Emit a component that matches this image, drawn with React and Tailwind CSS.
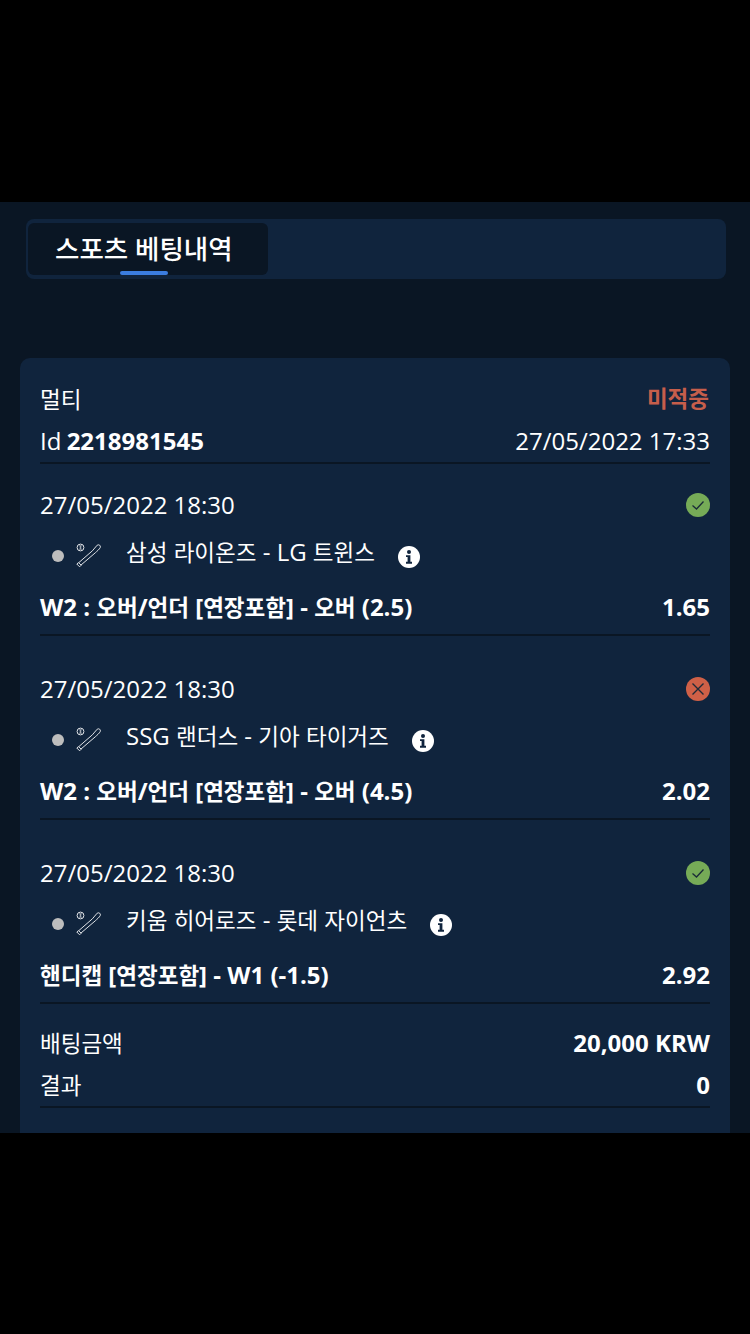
import React from "react";

const bets = [
    { status: "win", match: "삼성 라이온즈 - LG 트윈스", market: "W2 : 오버/언더 [연장포함] - 오버 (2.5)", odds: "1.65" },
    { status: "lose", match: "SSG 랜더스 - 기아 타이거즈", market: "W2 : 오버/언더 [연장포함] - 오버 (4.5)", odds: "2.02" },
    { status: "win", match: "키움 히어로즈 - 롯데 자이언츠", market: "핸디캡 [연장포함] - W1 (-1.5)", odds: "2.92" }
];

// hangul runs are set a bit smaller than the latin text around them
const Ko = ({ children }) => (
    <span>
        {children.split(/([가-힣]+)/).map((part, i) => (
            i % 2 === 1 ? <span key={i} className="text-[22.5px]">{part}</span> : part
        ))}
    </span>
);

const BatIcon = () => (
    <svg width="26" height="26" viewBox="0 0 26 26" fill="none" stroke="#dfe2e6" strokeWidth="1">
        <circle cx="4.5" cy="4.5" r="3.4" />
        <path d="M3.5 1.4c1 1.8 1 4.4 0 6.2M5.5 1.4c-1 1.8-1 4.4 0 6.2" strokeWidth="0.7" />
        <path d="M2.6 19.8 16.4 7.8c1.6-1.5 3-4 4.8-5.6 1.6-1.2 3.8.4 3.1 2.2-.9 2-3.4 3.8-5 5.4L5 22" />
        <path d="M0.8 21 2.5 19.6 5.2 22.2 3.6 23.8Z" />
    </svg>
);

const StatusIcon = ({ status }) => (
    <svg width="24" height="24" viewBox="0 0 24 24" fill="none">
        <circle cx="12" cy="12" r="12" fill={status === "win" ? "#76ab57" : "#cf6047"} />
        {status === "win" ? (
            <path d="M6.5 12.5 10.5 16 17.5 8.5" stroke="#1a2b38" strokeWidth="1.3" />
        ) : (
            <path d="M6.5 6.5 17.5 17.5M17.5 6.5 6.5 17.5" stroke="#1f2a38" strokeWidth="1.4" />
        )}
    </svg>
);

const InfoIcon = () => (
    <svg width="22" height="22" viewBox="0 0 22 22">
        <circle cx="11" cy="11" r="11" fill="#ffffff" />
        <circle cx="11" cy="6" r="2" fill="#10243d" />
        <path d="M8 9.2h4.4v6.6H14v1.9H8v-1.9h1.6v-4.7H8Z" fill="#10243d" />
    </svg>
);

const BetRow = ({ bet }) => (
    <div className="mb-[37px]">
        <div className="flex items-center justify-between h-[32px]">
            <span>27/05/2022 18:30</span>
            <StatusIcon status={bet.status} />
        </div>
        <div className="flex items-center h-[34px] mt-[15px] pl-[12px]">
            <span className="w-[12px] h-[12px] rounded-full bg-[#bdbdbd] mr-[12px] mt-[6px]"></span>
            <span className="mt-[6px]"><BatIcon /></span>
            <span className="ml-[24px] -translate-y-[1px]"><Ko>{bet.match}</Ko></span>
            <span className="ml-[23px] mt-[8px]"><InfoIcon /></span>
        </div>
        <div className="flex items-center justify-between h-[34px] mt-[20px] font-bold">
            <Ko>{bet.market}</Ko>
            <span>{bet.odds}</span>
        </div>
        <div className="h-[2px] mt-[10px] bg-[#0a1624]"></div>
    </div>
);

export default function App() {
    return (
        <div className="bg-black h-[1334px] pt-[202px] pb-[201px] text-white text-[24px] font-['Open_Sans','Noto_Sans_CJK_KR',sans-serif]">
            <div className="h-[931px] overflow-hidden bg-[#0a1624]">
                <div className="pt-[17px] pl-[26px] pr-[24px]">
                    <div className="h-[60px] rounded-[8px] bg-[#10243d] py-[4px] pl-[2px]">
                        <div className="relative w-[240px] h-[52px] rounded-[6px] bg-[#0a1624] pl-[27px] flex items-center">
                            <span className="text-[26.5px] font-medium translate-y-[1px]">스포츠 베팅내역</span>
                            <span className="absolute left-[92px] bottom-0 w-[48px] h-[4px] rounded-[2px] bg-[#3b7de0]"></span>
                        </div>
                    </div>
                </div>
                <div className="mt-[79px] mx-[20px] h-[800px] rounded-t-[10px] bg-[#10243d] px-[20px] pt-[24px]">
                    <div className="flex items-center justify-between h-[34px]">
                        <Ko>멀티</Ko>
                        <span className="font-bold text-[#c65e4b] -translate-y-[1px] -translate-x-[1px]"><Ko>미적중</Ko></span>
                    </div>
                    <div className="flex items-center justify-between h-[34px] mt-[8px]">
                        <span>Id <b className="-ml-[1px]">2218981545</b></span>
                        <span>27/05/2022 17:33</span>
                    </div>
                    <div className="h-[2px] mt-[4px] mb-[25px] bg-[#0a1624]"></div>
                    {bets.map((bet, i) => <BetRow key={i} bet={bet} />)}
                    <div className="flex items-center justify-between h-[34px] -mt-[15px]">
                        <Ko>배팅금액</Ko>
                        <span className="font-bold">20,000 KRW</span>
                    </div>
                    <div className="flex items-center justify-between h-[34px] mt-[8px]">
                        <Ko>결과</Ko>
                        <span className="font-bold">0</span>
                    </div>
                    <div className="h-[2px] mt-[4px] bg-[#0a1624]"></div>
                </div>
            </div>
        </div>
    );
}
